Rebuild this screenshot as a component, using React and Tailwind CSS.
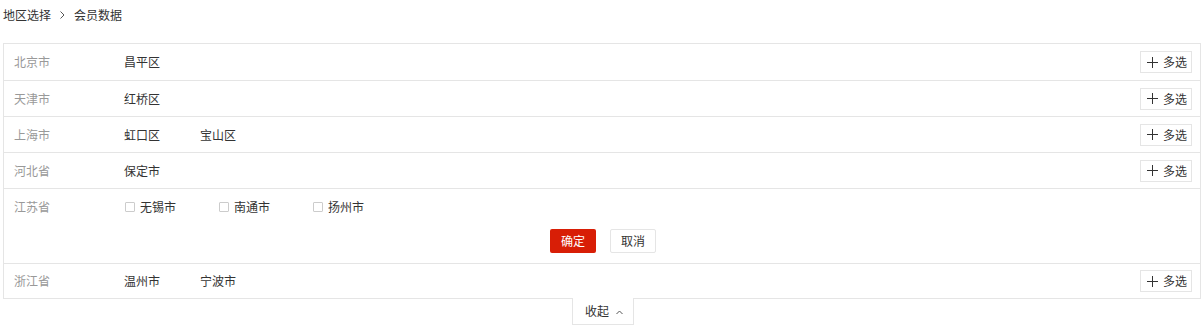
import React from 'react';

const FONT = { fontFamily: '"Noto Sans CJK SC", "Liberation Sans", sans-serif' };

const rows = [
  { name: '北京市', items: ['昌平区'] },
  { name: '天津市', items: ['红桥区'] },
  { name: '上海市', items: ['虹口区', '宝山区'] },
  { name: '河北省', items: ['保定市'] },
  { name: '江苏省', items: ['无锡市', '南通市', '扬州市'], multi: true },
  { name: '浙江省', items: ['温州市', '宁波市'] },
];

function MultiButton() {
  return (
    <button className="flex items-center h-[22px] w-[52px] pl-[6px] border border-[#e5e5e5] bg-white text-[12px] text-[#333]">
      <svg width="11" height="11" viewBox="0 0 11 11" className="mr-[5px]">
        <path d="M5.5 0v11M0 5.5h11" stroke="#333" strokeWidth="1" />
      </svg>
      多选
    </button>
  );
}

function Row({ row, first, last }) {
  if (row.multi) {
    return (
      <div className="border-b border-[#e5e5e5]">
        <div className="flex items-center h-[35px]">
          <div className="w-[120px] pl-[10px] text-[#999]">{row.name}</div>
          {row.items.map((it) => (
            <label key={it} className="flex items-center w-[94px] text-[#333]">
              <span className="w-[10px] h-[10px] border border-[#ccc] rounded-[1px] mr-[5px] ml-[1px]" />
              {it}
            </label>
          ))}
        </div>
        <div className="flex justify-center gap-[14px] pt-[5px] pb-[10px] pl-[2px]">
          <button className="h-[24px] w-[46px] bg-[#d81e06] text-white rounded-[2px]">确定</button>
          <button className="h-[24px] w-[46px] border border-[#e5e5e5] text-[#333] rounded-[2px]">取消</button>
        </div>
      </div>
    );
  }
  const h = first ? 'h-[37px]' : last ? 'h-[34px]' : 'h-[36px]';
  return (
    <div className={`flex items-center ${h} ${last ? '' : 'border-b border-[#e5e5e5]'}`}>
      <div className="w-[120px] pl-[10px] text-[#999]">{row.name}</div>
      <div className="flex flex-1">
        {row.items.map((it) => (
          <span key={it} className="w-[76px] text-[#333]">{it}</span>
        ))}
      </div>
      <div className="pr-[8px]">
        <MultiButton />
      </div>
    </div>
  );
}

export default function App() {
  return (
    <div className="bg-white w-[1203px] h-[325px] text-[12px] leading-[16px]" style={FONT}>
      <div className="flex items-center h-[30px] px-[3px] text-[#333]">
        <span>地区选择</span>
        <svg width="5" height="8" viewBox="0 0 5 8" className="mx-[9px]">
          <path d="M0.5 0.5L4 4L0.5 7.5" fill="none" stroke="#555" strokeWidth="1" />
        </svg>
        <span>会员数据</span>
      </div>
      <div className="mt-[13px] mx-[3px] w-[1198px] border border-[#e5e5e5]">
        {rows.map((r, i) => (
          <Row key={r.name} row={r} first={i === 0} last={i === rows.length - 1} />
        ))}
      </div>
      <div className="flex justify-center pl-[3px]">
        <div className="relative -mt-px flex items-center h-[27px] w-[62px] pl-[12px] pb-[1px] bg-white border border-t-0 border-[#e5e5e5] text-[#333]">
          收起
          <svg width="7" height="5" viewBox="0 0 7 5" className="ml-[7px] mt-[3px]">
            <path d="M0.5 4L3.5 1L6.5 4" fill="none" stroke="#555" strokeWidth="1" />
          </svg>
        </div>
      </div>
    </div>
  );
}
